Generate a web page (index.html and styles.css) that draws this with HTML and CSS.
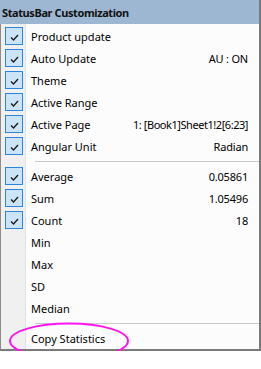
FILE: index.html
```html
<!DOCTYPE html>
<html lang="en">
<head>
    <meta charset="UTF-8">
    <meta name="viewport" content="width=device-width, initial-scale=1.0">
    <title>StatusBar Customization</title>
    <link rel="stylesheet" href="styles.css">
</head>
<body>
    <div class="menu">
        <div class="menu-title">StatusBar Customization</div>
        <div class="menu-body">
            <div class="item checked">
                <span class="check"><svg viewBox="0 0 16 16"><path d="M5 9.5l2.5 2.5 4.5-5"/></svg></span>
                <span class="label">Product update</span>
            </div>
            <div class="item checked">
                <span class="check"><svg viewBox="0 0 16 16"><path d="M5 9.5l2.5 2.5 4.5-5"/></svg></span>
                <span class="label">Auto Update</span>
                <span class="value">AU : ON</span>
            </div>
            <div class="item checked">
                <span class="check"><svg viewBox="0 0 16 16"><path d="M5 9.5l2.5 2.5 4.5-5"/></svg></span>
                <span class="label">Theme</span>
            </div>
            <div class="item checked">
                <span class="check"><svg viewBox="0 0 16 16"><path d="M5 9.5l2.5 2.5 4.5-5"/></svg></span>
                <span class="label">Active Range</span>
            </div>
            <div class="item checked">
                <span class="check"><svg viewBox="0 0 16 16"><path d="M5 9.5l2.5 2.5 4.5-5"/></svg></span>
                <span class="label">Active Page</span>
                <span class="value page-value">1: [Book1]Sheet1!2[6:23]</span>
            </div>
            <div class="item checked">
                <span class="check"><svg viewBox="0 0 16 16"><path d="M5 9.5l2.5 2.5 4.5-5"/></svg></span>
                <span class="label">Angular Unit</span>
                <span class="value">Radian</span>
            </div>

            <div class="sep"></div>

            <div class="item checked">
                <span class="check"><svg viewBox="0 0 16 16"><path d="M5 9.5l2.5 2.5 4.5-5"/></svg></span>
                <span class="label">Average</span>
                <span class="value">0.05861</span>
            </div>
            <div class="item checked">
                <span class="check"><svg viewBox="0 0 16 16"><path d="M5 9.5l2.5 2.5 4.5-5"/></svg></span>
                <span class="label">Sum</span>
                <span class="value">1.05496</span>
            </div>
            <div class="item checked">
                <span class="check"><svg viewBox="0 0 16 16"><path d="M5 9.5l2.5 2.5 4.5-5"/></svg></span>
                <span class="label">Count</span>
                <span class="value">18</span>
            </div>
            <div class="item">
                <span class="check"></span>
                <span class="label">Min</span>
            </div>
            <div class="item">
                <span class="check"></span>
                <span class="label">Max</span>
            </div>
            <div class="item">
                <span class="check"></span>
                <span class="label">SD</span>
            </div>
            <div class="item">
                <span class="check"></span>
                <span class="label">Median</span>
            </div>

            <div class="sep"></div>

            <div class="item">
                <span class="check"></span>
                <span class="label">Copy Statistics</span>
            </div>
        </div>
    </div>

    <svg class="highlight" width="124" height="40" viewBox="0 0 124 40">
        <ellipse cx="62" cy="20" rx="59" ry="17.5"/>
    </svg>
</body>
</html>
```

FILE: styles.css
```css
body {
    font-family: "Noto Sans", "Open Sans", sans-serif;
    margin: 0;
    padding: 0;
    background-color: #ffffff;
    position: relative;
}

.menu {
    width: 261px;
    box-sizing: border-box;
    border-left: 1px solid #8c8c8c;
    border-right: 2px solid #7a7a7a;
    border-bottom: 2px solid #7a7a7a;
    background-color: #fcfcfc;
}

.menu-title {
    height: 24px;
    line-height: 25px;
    padding-left: 2px;
    margin-left: -1px;
    background-color: #9db7d2;
    color: #111;
    font-size: 11px;
    font-weight: bold;
    letter-spacing: -0.4px;
}

.menu-body {
    padding-top: 1px;
    background: linear-gradient(to right, #f0f0f0 0 24px, #e2e2e2 24px 25px, #fcfcfc 25px);
}

.item {
    display: flex;
    align-items: center;
    height: 22px;
    padding-left: 4px;
    padding-right: 11px;
    font-size: 11px;
    color: #000;
}

.check {
    width: 18px;
    height: 18px;
    box-sizing: border-box;
    flex: none;
}

.checked .check {
    border: 1px solid #2a84d8;
    background-color: #cce4f7;
}

.check svg {
    display: block;
    width: 16px;
    height: 16px;
    fill: none;
    stroke: #1a1a1a;
    stroke-width: 1.3;
}

.label {
    margin-left: 8px;
    flex: 1;
    white-space: nowrap;
}

.value {
    white-space: nowrap;
    letter-spacing: -0.2px;
}

.page-value {
    letter-spacing: -0.45px;
}

.sep {
    height: 8px;
    margin-left: 34px;
    background: linear-gradient(#c9c9c9, #c9c9c9) 0 4px / 100% 1px no-repeat;
}

.highlight {
    position: absolute;
    left: 7px;
    top: 321px;
    fill: none;
    stroke: #ff14f0;
    stroke-width: 2;
}
```
